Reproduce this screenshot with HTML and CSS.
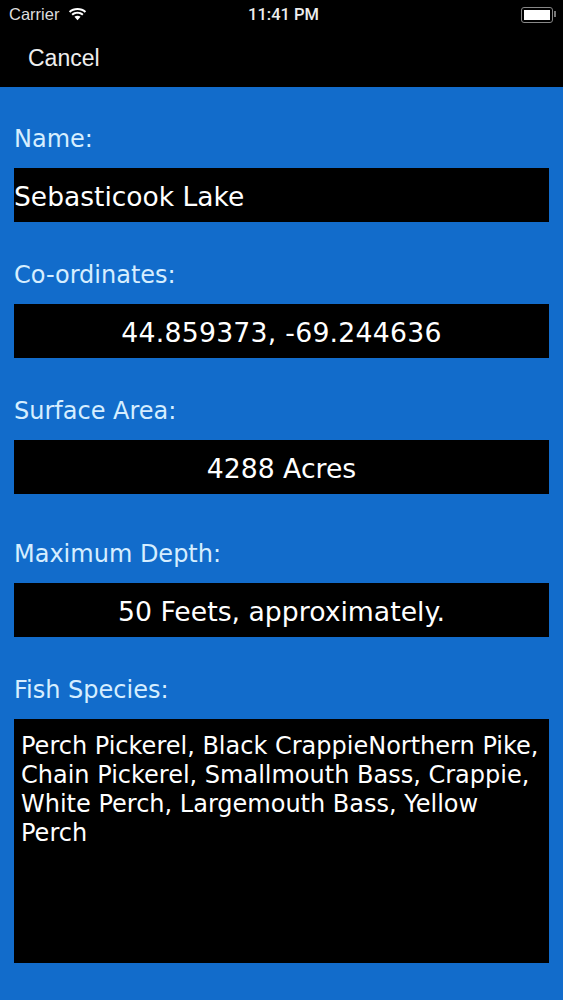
FILE: index.html
```html
<!DOCTYPE html>
<html lang="en">
<head>
<meta charset="utf-8">
<title>Sebasticook Lake</title>
<link rel="stylesheet" href="styles.css">
</head>
<body>
<header class="top">
  <div class="status">
    <div class="status-left">
      <span class="carrier">Carrier</span>
      <svg class="wifi" viewBox="0 0 20 14" width="19" height="13"><path d="M10 2.200c3 0 5.700 1.100 7.800 3l1.500-1.700C16.800 1.200 13.500 0 10 0S3.200 1.200.7 3.500l1.500 1.700c2.100-1.900 4.800-3 7.800-3z M10 6.300c1.900 0 3.600.7 5 1.900l1.500-1.700C14.700 4.900 12.500 4 10 4s-4.700.9-6.500 2.500L5 8.200c1.400-1.200 3.100-1.900 5-1.900z M10 8.300c-1.300 0-2.400.5-3.300 1.200L10 13.200l3.300-3.700c-.9-.7-2-1.200-3.300-1.200z" fill="#fff"/></svg>
    </div>
    <span class="time">11:41 PM</span>
    <div class="battery"><span class="battery-fill"></span></div>
  </div>
  <div class="nav"><span class="cancel">Cancel</span></div>
</header>
<main class="form">
  <section class="group">
    <div class="label">Name:</div>
    <div class="field field-left">Sebasticook Lake</div>
  </section>
  <section class="group">
    <div class="label">Co-ordinates:</div>
    <div class="field field-num">44.859373, -69.244636</div>
  </section>
  <section class="group">
    <div class="label">Surface Area:</div>
    <div class="field">4288 Acres</div>
  </section>
  <section class="group group-wide">
    <div class="label">Maximum Depth:</div>
    <div class="field">50 Feets, approximately.</div>
  </section>
  <section class="group">
    <div class="label">Fish Species:</div>
    <div class="area">Perch Pickerel, Black CrappieNorthern Pike, Chain Pickerel, Smallmouth Bass, Crappie, White Perch, Largemouth Bass, Yellow Perch</div>
  </section>
</main>
</body>
</html>
```
FILE: styles.css
```css
* { box-sizing: border-box; }
html, body { margin: 0; padding: 0; }
body {
  width: 563px;
  height: 1000px;
  overflow: hidden;
  background: #126ccb;
  font-family: "DejaVu Sans", Verdana, sans-serif;
  color: #fff;
}
.top {
  height: 87px;
  background: #000;
  font-family: "Liberation Sans", Arial, sans-serif;
}
.status {
  height: 29px;
  padding: 0 10px 0 9px;
  display: flex;
  align-items: center;
  justify-content: space-between;
  position: relative;
  font-size: 16.500px;
}
.status-left { display: flex; align-items: center; gap: 9px; color: #ddd; }
.wifi { display: block; margin-top: -1px; }
.time {
  position: absolute;
  left: 4px;
  right: 0;
  text-align: center;
  color: #eee;
  font-family: Roboto, "Liberation Sans", sans-serif;
  font-weight: 500;
  font-size: 16.500px;
}
.battery {
  width: 32px;
  height: 16px;
  border: 1px solid #888;
  border-radius: 3px;
  padding: 2px;
  position: relative;
}
.battery::after {
  content: "";
  position: absolute;
  right: -4px;
  top: 3px;
  width: 2px;
  height: 6px;
  background: #777;
}
.battery-fill { display: block; height: 100%; width: 100%; background: #fff; }
.nav { height: 58px; padding: 16px 0 0 28px; }
.cancel { font-size: 23px; color: #eee; }
.form { padding: 37px 14px 0; }
.group { margin-bottom: 38px; }
.group-wide { margin-top: 45px; }
.label {
  font-size: 24px;
  line-height: 30px;
  color: #d6eeff;
  margin-bottom: 14px;
}
.field {
  height: 54px;
  background: #000;
  font-size: 26.700px;
  padding-top: 2px;
  line-height: 54px;
  text-align: center;
  white-space: nowrap;
}
.field-left { text-align: left; font-size: 26.500px; }
.field-num { letter-spacing: 0.250px; }
.area {
  height: 244px;
  background: #000;
  padding: 13px 7px;
  font-size: 24px;
  line-height: 29px;
}
```
